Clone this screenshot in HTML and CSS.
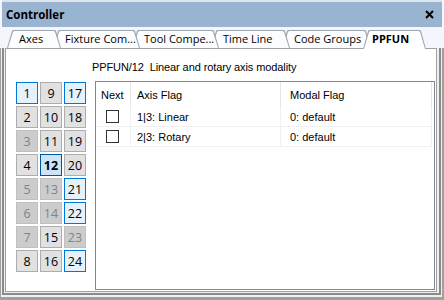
FILE: index.html
```html
<!DOCTYPE html>
<html>
<head>
  <title>Controller</title>
  <link rel="stylesheet" href="styles.css">
</head>
<body>
  <div class="window">
    <div class="titlebar">
      <span class="title">Controller</span>
      <svg class="close" width="9" height="9" viewBox="0 0 9 9">
        <path d="M1 1 L8 8 M8 1 L1 8" stroke="#000" stroke-width="2"/>
      </svg>
    </div>
    <div class="tabstrip">
      <div class="tab tab-axes">Axes</div>
      <div class="tab tab-fixture">Fixture Com...</div>
      <div class="tab tab-tool">Tool Compe...</div>
      <div class="tab tab-time">Time Line</div>
      <div class="tab tab-code">Code Groups</div>
      <div class="tab tab-active">PPFUN</div>
    </div>
    <div class="frame">
      <div class="frame-mid">
        <div class="panel">
          <div class="keys">
            <div class="key key-blue">1</div>
            <div class="key">2</div>
            <div class="key key-off">3</div>
            <div class="key">4</div>
            <div class="key key-off">5</div>
            <div class="key key-off">6</div>
            <div class="key key-off">7</div>
            <div class="key">8</div>
            <div class="key">9</div>
            <div class="key">10</div>
            <div class="key">11</div>
            <div class="key key-current">12</div>
            <div class="key key-off">13</div>
            <div class="key key-off">14</div>
            <div class="key">15</div>
            <div class="key">16</div>
            <div class="key key-blue">17</div>
            <div class="key">18</div>
            <div class="key">19</div>
            <div class="key">20</div>
            <div class="key key-blue">21</div>
            <div class="key key-blue">22</div>
            <div class="key key-off">23</div>
            <div class="key key-blue">24</div>
          </div>
          <div class="detail">
            <div class="caption">PPFUN/12&nbsp; Linear and rotary axis modality</div>
            <div class="list">
              <div class="row list-head">
                <div class="cell col-next">Next</div>
                <div class="cell col-axis">Axis Flag</div>
                <div class="cell col-modal">Modal Flag</div>
              </div>
              <div class="row">
                <div class="cell col-next"><span class="check"></span></div>
                <div class="cell col-axis">1|3: Linear</div>
                <div class="cell col-modal">0: default</div>
              </div>
              <div class="row">
                <div class="cell col-next"><span class="check"></span></div>
                <div class="cell col-axis">2|3: Rotary</div>
                <div class="cell col-modal">0: default</div>
              </div>
            </div>
          </div>
        </div>
      </div>
    </div>
  </div>
</body>
</html>
```

FILE: styles.css
```css
body {
  margin: 0;
  background: #f0f0f0;
  font-family: "Liberation Sans", Arial, sans-serif;
}
.window {
  width: 444px;
  height: 300px;
  display: flex;
  flex-direction: column;
  background: #f4f6fb;
}

/* title bar */
.titlebar {
  height: 25px;
  margin: 2px 2px 0;
  background: #99b4d1;
  display: flex;
  align-items: center;
  justify-content: space-between;
  padding: 0 8px 0 4px;
  box-shadow: 0 -2px 0 #dde4ec;
}
.title {
  font-family: "Open Sans", sans-serif;
  font-weight: bold;
  font-size: 11.5px;
  color: #000;
}

/* tabs */
.tabstrip {
  height: 21px;
  display: flex;
  align-items: flex-end;
  padding-left: 7px;
  position: relative;
  z-index: 1;
}
.tab {
  position: relative;
  height: 18px;
  line-height: 18px;
  padding-left: 12px;
  margin-left: -8px;
  font-family: "Open Sans", sans-serif;
  font-size: 11px;
  white-space: nowrap;
  box-sizing: border-box;
}
.tab::before, .tab::after {
  content: "";
  position: absolute;
  z-index: -1;
}
.tab::before {
  inset: 0;
  background: #9ea6b2;
  clip-path: polygon(0 100%, 5px 1px, 6px 0, calc(100% - 6px) 0, calc(100% - 5px) 1px, 100% 100%);
}
.tab::after {
  inset: 1px 1px 0 1px;
  background: #fcfdfe;
  clip-path: polygon(0 100%, 5px 1px, 6px 0, calc(100% - 6px) 0, calc(100% - 5px) 1px, 100% 100%);
}
.tab-axes { width: 54px; margin-left: 0; z-index: 6; }
.tab-fixture { width: 87px; z-index: 5; }
.tab-tool { width: 87px; z-index: 4; }
.tab-time { width: 79px; z-index: 3; }
.tab-code { width: 89px; z-index: 2; }
.tab-active {
  width: 63px;
  height: 19px;
  margin-bottom: -1px;
  padding-left: 9px;
  font-weight: bold;
  z-index: 7;
}
.tab-active::after {
  background: #fff;
  bottom: 0;
}

/* window frame */
.frame {
  flex: 1;
  display: flex;
  border: solid #a0a0a0;
  border-width: 0 2px 3px 1px;
  padding: 0 1px 2px 1px;
  background: #f0f0f0;
}
.frame-mid {
  flex: 1;
  display: flex;
  border: solid #8a8a8a;
  border-width: 0 2px 2px 2px;
  padding: 0 2px 1px 1px;
}
.panel {
  flex: 1;
  display: flex;
  gap: 6px;
  background: #fff;
  border: 1px solid #a0a0a0;
  padding: 0 1px 1px 10px;
}

/* key grid */
.keys {
  margin-top: 33px;
  display: grid;
  grid-auto-flow: column;
  grid-template-columns: repeat(3, 22px);
  grid-template-rows: repeat(8, 22px);
  gap: 2px;
  align-self: flex-start;
}
.key {
  box-sizing: border-box;
  display: flex;
  align-items: center;
  justify-content: center;
  background: #e1e1e1;
  border: 1px solid #adadad;
  font-family: "Open Sans", sans-serif;
  font-size: 12.5px;
  color: #000;
}
.key-blue {
  background: #e5f1fb;
  border-color: #0078d7;
}
.key-current {
  background: #cce4f7;
  border-color: #005499;
  font-weight: bold;
}
.key-off {
  background: #cccccc;
  border-color: #bfbfbf;
  color: #838383;
}

/* detail */
.detail {
  flex: 1;
  display: flex;
  flex-direction: column;
}
.caption {
  font-size: 11px;
  line-height: 14px;
  padding-top: 11px;
  margin-bottom: 7px;
  letter-spacing: -0.1px;
}
.list {
  flex: 1;
  margin-left: 3px;
  border: 1px solid #828790;
  font-size: 11px;
}
.row {
  display: flex;
  height: 19px;
  border-bottom: 1px solid #f0f0f0;
  margin-right: 2px;
}
.list-head {
  height: 25px;
  border-bottom: 0;
}
.cell {
  display: flex;
  align-items: center;
  box-sizing: border-box;
  border-right: 1px solid #f0f0f0;
}
.list-head .cell {
  border-right-color: #e5e5e5;
}
.col-next {
  width: 35px;
  justify-content: center;
  padding-right: 1px;
}
.list-head .col-next {
  justify-content: flex-start;
  padding-left: 5px;
}
.col-axis {
  width: 150px;
  padding-left: 6px;
}
.col-modal {
  width: 151px;
  padding-left: 9px;
}
.check {
  width: 13px;
  height: 13px;
  box-sizing: border-box;
  border: 1px solid #333;
  background: #fff;
}
```
